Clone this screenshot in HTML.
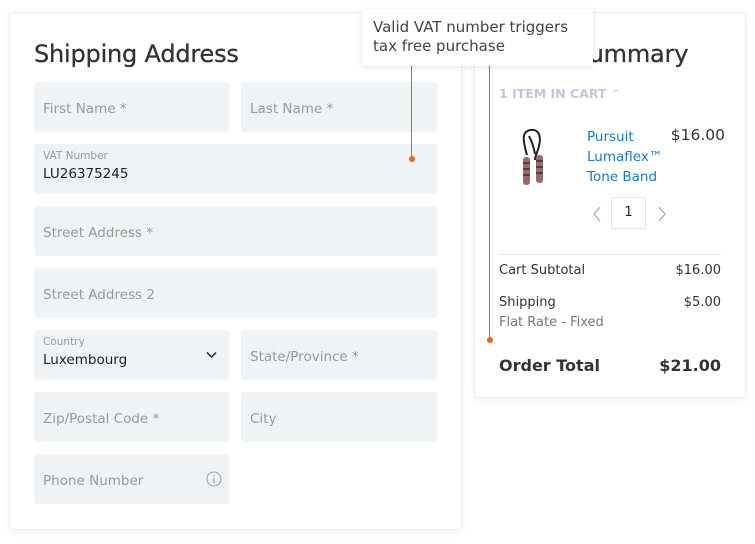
<!DOCTYPE html>
<html><head><meta charset="utf-8"><style>
*{box-sizing:border-box;margin:0;padding:0}
body{width:755px;height:544px;background:#fff;font-family:"DejaVu Sans","Liberation Sans",sans-serif;color:#333;position:relative;overflow:hidden}
.card{position:absolute;background:#fff;border:1px solid #eee;border-radius:4px;box-shadow:0 2px 8px rgba(0,0,0,.06)}
.f{position:absolute;background:#f0f3f6;border-radius:3px;height:50px;font-size:13.5px;color:#999;padding:19px 9px 0}
.f.l{left:24px;width:195px}.f.r{left:231px;width:196px}.f.w{left:24px;width:403px}
.f small{position:absolute;top:6px;left:9px;font-size:10.5px;color:#999}
.f .v{position:absolute;top:22px;left:9px;font-size:13.5px;color:#222}
h2{position:absolute;font-weight:normal;font-size:24px;color:#333;letter-spacing:-.2px;-webkit-text-stroke:.3px #333}
.row{position:absolute;left:24px;right:24px;font-size:13px;color:#333;display:flex;justify-content:space-between}
</style></head><body>
<div class="card" style="left:9px;top:12px;width:453px;height:518px">
<h2 style="left:24px;top:27px">Shipping Address</h2>
<div class="f l" style="top:69px">First Name *</div>
<div class="f r" style="top:69px">Last Name *</div>
<div class="f w" style="top:131px"><small>VAT Number</small><span class="v">LU26375245</span></div>
<div class="f w" style="top:193px">Street Address *</div>
<div class="f w" style="top:255px">Street Address 2</div>
<div class="f l" style="top:317px"><small>Country</small><span class="v">Luxembourg</span>
<svg style="position:absolute;right:12px;top:21px" width="11" height="8" viewBox="0 0 11 8"><path d="M1 1.5l4.5 4.5 4.5-4.5" fill="none" stroke="#222" stroke-width="1.5"/></svg></div>
<div class="f r" style="top:317px">State/Province *</div>
<div class="f l" style="top:379px">Zip/Postal Code *</div>
<div class="f r" style="top:379px">City</div>
<div class="f l" style="top:441px">Phone Number
<svg style="position:absolute;right:7px;top:17px" width="16" height="16" viewBox="0 0 16 16"><circle cx="8" cy="8" r="7" fill="none" stroke="#999"/><path d="M8 7v5M8 4.2v1" stroke="#999" stroke-width="1.2"/></svg></div>
</div>
<div class="card" style="left:474px;top:12px;width:272px;height:386px">
<h2 style="left:24px;top:27px">Order Summary</h2>
<div style="position:absolute;left:24px;top:73px;font-size:12.5px;font-weight:bold;color:#c4c4d8">1 ITEM IN CART <span style="font-weight:normal">&#8963;</span></div>
<svg style="position:absolute;left:40px;top:114px" width="36" height="62" viewBox="0 0 36 62"><path d="M12 28C8 14 6 4 16 3c9-1 10 8 8 16-2 8-4 10-4 14M14 9c2 4 4 8 6 18" fill="none" stroke="#222" stroke-width="2"/><rect x="8" y="30" width="7" height="28" rx="3" fill="#9a6a6a"/><rect x="21" y="28" width="7" height="28" rx="3" fill="#9a6a6a"/><path d="M8 36h7M8 42h7M8 48h7M21 34h7M21 40h7M21 46h7" stroke="#333" stroke-width="1.5"/></svg>
<div style="position:absolute;left:112px;top:114px;font-size:13.5px;line-height:20px;color:#1979c3">Pursuit<br>Lumaflex™<br>Tone Band</div>
<div style="position:absolute;right:20px;top:113px;font-size:15.5px;color:#333">$16.00</div>
<svg style="position:absolute;left:117px;top:193px" width="10" height="16" viewBox="0 0 10 16"><path d="M8 1L2 8l6 7" fill="none" stroke="#aaa" stroke-width="1.3"/></svg>
<div style="position:absolute;left:136px;top:184px;width:35px;height:32px;border:1px solid #e5e5e5;font-size:13px;text-align:center;line-height:30px;color:#222">1</div>
<svg style="position:absolute;left:182px;top:193px" width="10" height="16" viewBox="0 0 10 16"><path d="M2 1l6 7-6 7" fill="none" stroke="#aaa" stroke-width="1.3"/></svg>
<div style="position:absolute;left:24px;right:24px;top:241px;border-top:1px solid #e8e8e8"></div>
<div class="row" style="top:250px"><span>Cart Subtotal</span><span>$16.00</span></div>
<div class="row" style="top:282px"><span>Shipping</span><span>$5.00</span></div>
<div class="row" style="top:302px;color:#777"><span>Flat Rate - Fixed</span></div>
<div class="row" style="top:343px;font-size:16px;font-weight:bold"><span>Order Total</span><span>$21.00</span></div>
</div>
<div style="position:absolute;left:411px;top:66px;width:1px;height:92px;background:#d8641f"></div>
<div style="position:absolute;left:408.5px;top:155.5px;width:6px;height:6px;border-radius:50%;background:#e8641f"></div>
<div style="position:absolute;left:489px;top:66px;width:1px;height:274px;background:#d8641f"></div>
<div style="position:absolute;left:486.5px;top:336.5px;width:6px;height:6px;border-radius:50%;background:#e8641f"></div>
<div style="position:absolute;left:362px;top:10px;width:231px;height:56px;background:#fff;box-shadow:0 1px 6px rgba(0,0,0,.12);font-size:15px;line-height:19px;color:#444;padding:8px 11px">Valid VAT number triggers<br>tax free purchase</div>
</body></html>
